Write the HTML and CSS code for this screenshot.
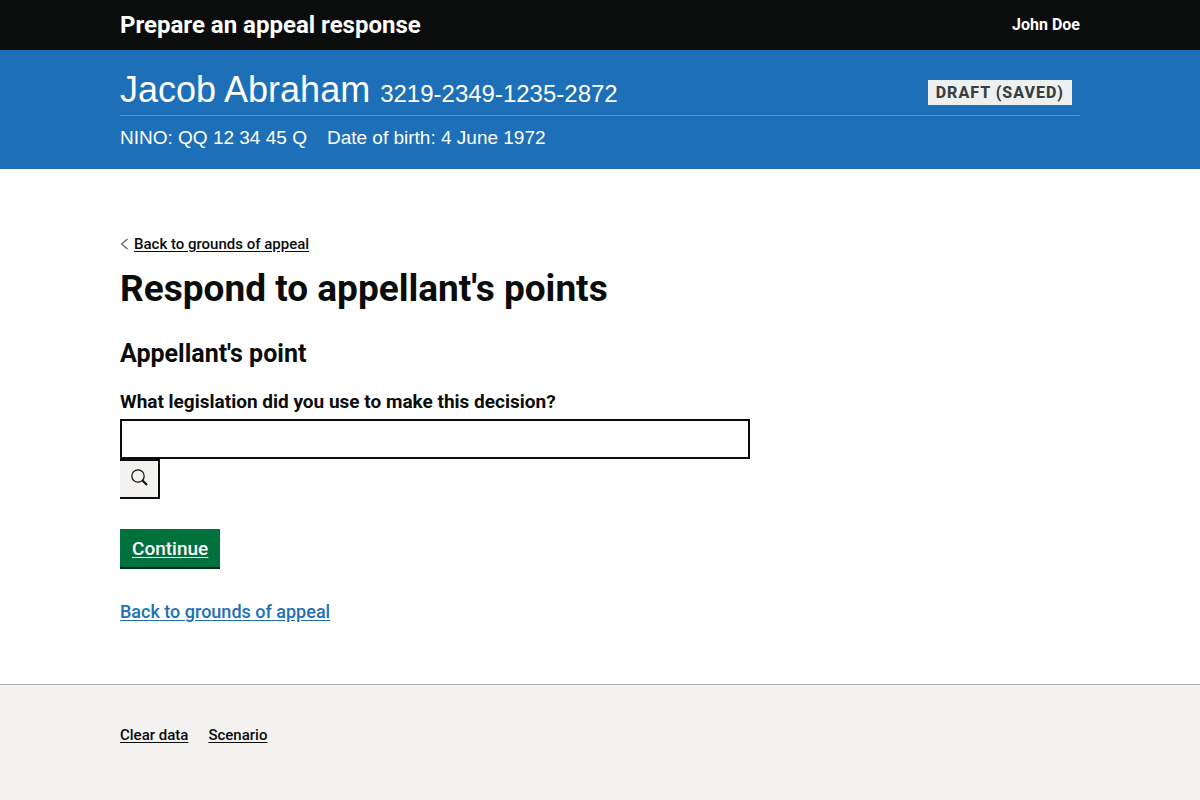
FILE: index.html
```html
<!DOCTYPE html>
<html lang="en">
<head>
  <meta charset="utf-8">
  <meta name="viewport" content="width=device-width, initial-scale=1">
  <title>Respond to appellant's points</title>
  <link rel="stylesheet" href="styles.css">
</head>
<body class="page">
  <header class="header">
    <div class="container header-row">
      <span class="service-name">Prepare an appeal response</span>
      <span class="user-name">John Doe</span>
    </div>
  </header>
  <section class="case-bar">
    <div class="container">
      <div class="case-top">
        <p class="case-title">Jacob Abraham <span class="case-ref">3219-2349-1235-2872</span></p>
        <strong class="tag">Draft (saved)</strong>
      </div>
      <div class="case-details">
        <span>NINO: QQ 12 34 45 Q</span>
        <span>Date of birth: 4 June 1972</span>
      </div>
    </div>
  </section>
  <main class="container main">
    <div class="back">
      <svg class="back-icon" viewBox="0 0 8 12" aria-hidden="true"><path d="M7.500 1L1.500 6L7.500 11" fill="none" stroke="#505a5f" stroke-width="1.100"/></svg>
      <a class="small-link" href="#">Back to grounds of appeal</a>
    </div>
    <h1 class="title">Respond to appellant's points</h1>
    <h2 class="subtitle">Appellant's point</h2>
    <form class="form">
      <label class="label" for="legislation">What legislation did you use to make this decision?</label>
      <input class="input" id="legislation" type="text">
      <button class="search" type="button" aria-label="Search">
        <svg class="search-icon" viewBox="0 0 18 18" aria-hidden="true"><circle cx="8" cy="7" r="6.200" fill="none" stroke="#0b0c0c" stroke-width="1.200"/><path d="M12.300 11.300L17 16" stroke="#0b0c0c" stroke-width="2"/></svg>
      </button>
    </form>
    <a class="button" href="#">Continue</a>
    <p class="return"><a class="link" href="#">Back to grounds of appeal</a></p>
  </main>
  <footer class="footer">
    <nav class="container footer-links">
      <a class="small-link" href="#">Clear data</a>
      <a class="small-link" href="#">Scenario</a>
    </nav>
  </footer>
</body>
</html>
```
FILE: styles.css
```css
* {
  box-sizing: border-box;
}

.page {
  display: flex;
  flex-direction: column;
  min-height: 100vh;
  margin: 0;
  background: #fff;
  color: #0b0c0c;
  font-family: Roboto, "Liberation Sans", sans-serif;
  font-size: 19px;
  line-height: 25px;
}

.container {
  width: calc(100% - 60px);
  max-width: 960px;
  margin: 0 auto;
}

.header {
  background: #0b0c0c;
  color: #fff;
  font-weight: 700;
}

.header-row {
  display: flex;
  align-items: center;
  justify-content: space-between;
  padding: 10px 0;
}

.service-name {
  font-size: 24px;
  line-height: 30px;
}

.user-name {
  font-size: 16px;
  line-height: 20px;
}

.case-bar {
  padding: 20px 0 15px;
  background: #1d70b8;
  color: #fff;
  font-family: "Liberation Sans", Arial, sans-serif;
}

.case-top {
  display: flex;
  align-items: center;
  justify-content: space-between;
  padding: 0 8px 1px 0;
  border-bottom: 1px solid #5694ca;
}

.case-title {
  margin: 0;
  font-size: 36px;
  line-height: 40px;
}

.case-ref {
  font-size: 24px;
}

.tag {
  padding: 5px 8px 4px;
  background: #eeefef;
  color: #383f43;
  font-family: Roboto, "Liberation Sans", sans-serif;
  font-size: 16px;
  font-weight: 800;
  line-height: 16px;
  letter-spacing: 1px;
  text-transform: uppercase;
}

.case-details {
  display: flex;
  gap: 20px;
  padding: 9px 0 4px;
  line-height: 25px;
}

.main {
  flex: 1;
  padding: 65px 0 60px;
}

.back {
  display: flex;
  align-items: center;
  gap: 6px;
  line-height: 20px;
}

.back-icon {
  width: 8px;
  height: 12px;
}

.small-link {
  color: #0b0c0c;
  font-size: 15px;
  font-weight: 500;
  line-height: 20px;
  text-underline-offset: 2px;
}

.title {
  margin: 15px 0 30px;
  font-size: 37px;
  line-height: 40px;
}

.subtitle {
  margin: 0 0 20px;
  font-size: 25px;
  line-height: 30px;
}

.form {
  display: flex;
  flex-direction: column;
  align-items: flex-start;
  width: 66%;
  max-width: 630px;
  margin-bottom: 30px;
}

.label {
  margin-bottom: 5px;
  font-weight: 700;
}

.input {
  width: 100%;
  height: 40px;
  padding: 5px;
  border: 2px solid #0b0c0c;
  border-radius: 0;
  background: #fff;
  font: inherit;
}

.search {
  width: 40px;
  height: 40px;
  padding: 0 0 2px;
  border: 2px solid #0b0c0c;
  border-left: 0;
  background: #f3f2f1;
}

.search-icon {
  width: 18px;
  height: 18px;
  vertical-align: middle;
}

.button {
  display: inline-block;
  padding: 7px 12px 6px;
  border-bottom: 2px solid #002d18;
  background: #00703c;
  color: #fff;
  font-weight: 500;
  text-underline-offset: 2px;
}

.return {
  margin: 30px 0 0;
}

.link {
  color: #1d70b8;
  font-size: 18px;
  font-weight: 500;
  text-underline-offset: 2px;
}

.footer {
  padding: 40px 0 55px;
  border-top: 1px solid #b1b4b6;
  background: #f3f2f1;
}

.footer-links {
  display: flex;
  gap: 20px;
}
```
